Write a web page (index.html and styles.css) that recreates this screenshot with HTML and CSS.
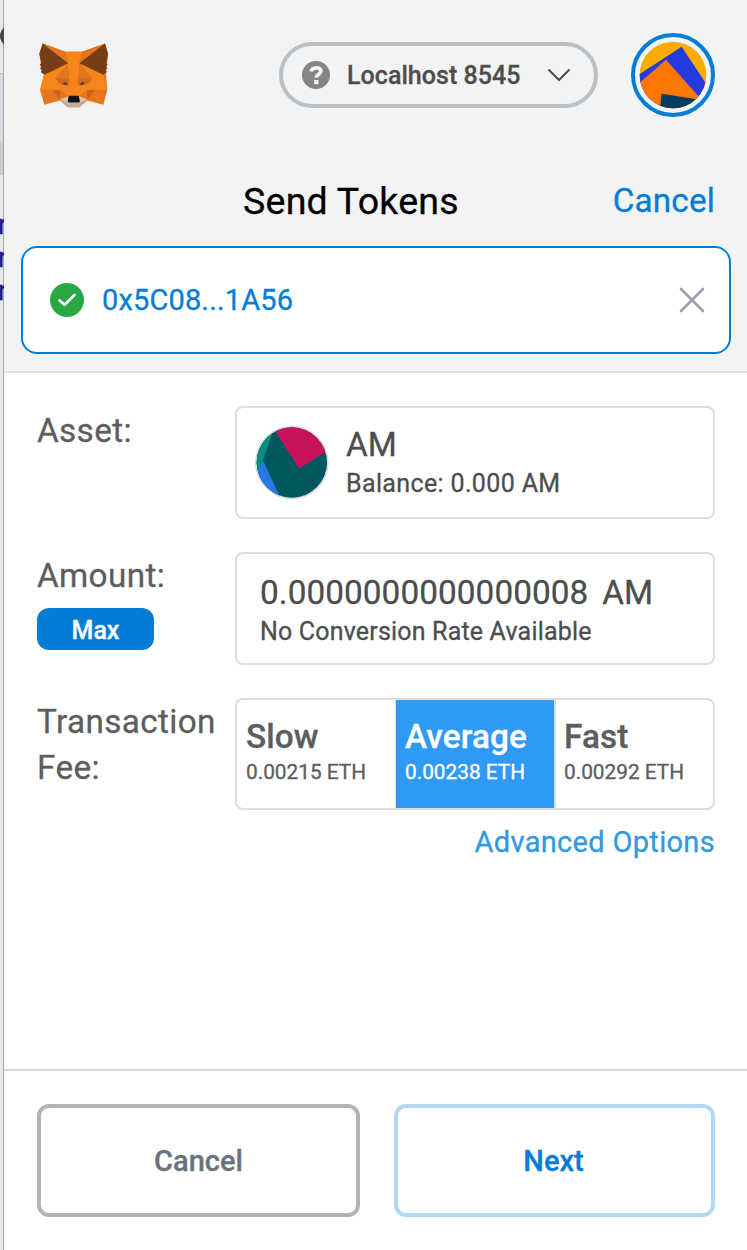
FILE: index.html
```html
<!DOCTYPE html>
<html lang="en">
<head>
<meta charset="utf-8">
<title>Send Tokens</title>
<link rel="stylesheet" href="styles.css">
</head>
<body>
<div class="window">
  <aside class="backdrop">
    <div class="backdrop-top"><span class="backdrop-dot"></span></div>
    <div class="backdrop-bar"></div>
    <div class="backdrop-shade"></div>
    <div class="backdrop-text"><span>r</span><span>r</span><span>r</span></div>
  </aside>
  <div class="popup">
    <header class="app-header">
      <svg class="fox" viewBox="117 128 207 194">
        <path fill="#e4761b" d="M128 129 196 154H246L315 129 324 160 318 223 322 268 310 313 262 300 238 320H204L180 300 133 313 120 268 132 223 118 160Z"/>
        <path fill="#f6851b" d="M132 223 204 188 207 154H236L239 188 310 223 322 268H268L238 287H204L172 268H120Z"/>
        <path fill="#e2761b" d="M128 129 196 154 204 188ZM315 129 246 154 239 188ZM204 188 166 233H208ZM239 188 278 233H233Z"/>
        <path fill="#f6851b" d="M196 154H246L237 190 234 252 237 287H204L208 252 206 190Z"/>
        <path fill="#763d16" d="M128 129 204 188 133 223 123 215 125 208 120 203 124 199 119 193 123 188 118 160ZM315 129 324 160 319 188 323 193 318 199 322 203 317 208 320 215 310 223 238 188Z"/>
        <path fill="#d5681a" d="M166 233 208 234 207 255 180 251ZM278 233 234 234 235 255 262 251Z"/>
        <path fill="#cd6116" d="M158 269H181L180 297ZM285 269H260L262 297Z"/>
        <path fill="#e4761b" d="M181 269 205 286 180 297ZM260 269 237 286 262 297Z"/>
        <path fill="#4a4346" d="M187 249 197 244 203 254 192 253ZM255 249 245 244 239 254 250 253Z"/>
        <path fill="#d7c1b3" d="M180 298 204 287H238L262 297 238 310H204Z"/>
        <path fill="#c0ad9e" d="M180 298 204 306H238L262 297 238 320H206Z"/>
        <path fill="#161616" d="M206 286H236L240 303 237 306H206L203 303Z"/>
      </svg>
      <div class="network">
        <svg class="network-icon" viewBox="0 0 28 28"><circle cx="14" cy="14" r="14" fill="#858585"/><path d="M9.2 10.4C9.8 5.8 18.9 5.5 18.9 10.1 18.9 13.3 14.5 13 14.4 16.7" fill="none" stroke="#f2f3f4" stroke-width="3.8"/><rect x="12.2" y="19" width="4.3" height="4.2" fill="#f2f3f4"/></svg>
        <span class="network-name">Localhost 8545</span>
        <svg class="chevron" viewBox="0 0 24 14"><path d="M1.5 1.5 12 12 22.5 1.5" fill="none" stroke="#4d4d4d" stroke-width="2.1"/></svg>
      </div>
      <svg class="account" viewBox="393 39 252 252">
        <defs><clipPath id="account-clip"><circle cx="519" cy="165" r="100"/></clipPath></defs>
        <circle cx="519" cy="165" r="120" fill="#f2f3f4" stroke="#037dd6" stroke-width="12"/>
        <g clip-path="url(#account-clip)">
          <path fill="#faac00" d="M410 60H630V270H410Z"/>
          <path fill="#2339e1" d="M410 168 545 80 640 224 600 275 410 250Z"/>
          <path fill="#fb7602" d="M410 196 498 119 630 267 590 300H410Z"/>
          <path fill="#033f5d" d="M485 221 600 239 620 280H478Z"/>
        </g>
      </svg>
    </header>
    <section class="recipient">
      <div class="title-row"><h1 class="title">Send Tokens</h1><a class="title-cancel">Cancel</a></div>
      <div class="address">
        <svg class="check" viewBox="0 0 34 34"><circle cx="17" cy="17" r="17" fill="#28a745"/><path d="m9.5 17.4 5 4.3L24.5 12" fill="none" stroke="#fff" stroke-width="2.8" stroke-linecap="round" stroke-linejoin="round"/></svg>
        <span class="address-text">0x5C08...1A56</span>
        <svg class="clear" viewBox="0 0 26 26"><path d="m2 2 22 22m0-22-22 22" stroke="#9b9fb2" stroke-width="2.6" stroke-linecap="round"/></svg>
      </div>
    </section>
    <main class="form">
      <div class="row">
        <div class="label"><span class="label-text asset">Asset:</span></div>
        <div class="field asset-field">
          <svg class="token" viewBox="72 74 224 226">
            <defs><clipPath id="token-clip"><circle cx="185" cy="187" r="106"/></clipPath></defs>
            <circle cx="185" cy="187" r="111" fill="#d6dadd"/>
            <g clip-path="url(#token-clip)">
              <path fill="#01575e" d="M70 70H300V300H70Z"/>
              <path fill="#c7135c" d="M127 80 207 205 300 146V70H120Z"/>
              <path fill="#048f82" d="M131 84 98 180 80 230 60 180 110 70Z"/>
              <path fill="#2779e2" d="M98 180 152 297 100 300 72 240Z"/>
            </g>
          </svg>
          <div class="lines"><span class="big am">AM</span><span class="small balance">Balance: 0.000 AM</span></div>
        </div>
      </div>
      <div class="row">
        <div class="label"><span class="label-text amount">Amount:</span><button class="max">Max</button></div>
        <div class="field amount-field">
          <div class="lines"><div class="amount-line"><span class="big value">0.0000000000000008</span><span class="big unit">AM</span></div><span class="small rate">No Conversion Rate Available</span></div>
        </div>
      </div>
      <div class="row">
        <div class="label"><span class="label-text fee">Transaction<br>Fee:</span></div>
        <div class="field fees">
          <div class="fee-option"><span class="speed">Slow</span><span class="cost">0.00215 ETH</span></div>
          <div class="fee-option selected"><span class="speed">Average</span><span class="cost">0.00238 ETH</span></div>
          <div class="fee-option"><span class="speed">Fast</span><span class="cost">0.00292 ETH</span></div>
        </div>
      </div>
      <a class="advanced">Advanced Options</a>
    </main>
    <footer class="actions">
      <button class="action secondary">Cancel</button>
      <button class="action primary">Next</button>
    </footer>
  </div>
</div>
</body>
</html>
```
FILE: styles.css
```css
* { box-sizing: border-box; }
body { margin: 0; font-family: Roboto, "Liberation Sans", sans-serif; color: #4d4d4d; -webkit-text-stroke: 0.3px; }
svg { display: block; flex: none; }
button { font: inherit; padding: 0; margin: 0; }
.window { width: 747px; height: 1250px; display: flex; overflow: hidden; background: #fff; }

.backdrop { width: 4px; flex: none; overflow: hidden; background: linear-gradient(90deg, #e9e9e9 0 2px, #dcdcdc 3px, #ababab 3px); }
.backdrop-top { height: 74px; padding-top: 25px; border-bottom: 1px solid #bbb; }
.backdrop-dot { display: block; width: 22px; height: 22px; border-radius: 50%; background: #484848; }
.backdrop-bar { height: 67px; background: linear-gradient(90deg, #d9dae2 0 2px, #c9cad0 3px, #a8a8ab 3px); }
.backdrop-shade { height: 34px; background: linear-gradient(90deg, #cdcdcd 0 3px, #a3a3a3 3px); }
.backdrop-text { display: flex; flex-direction: column; margin-top: 34px; margin-left: -2px; font-size: 27px; line-height: 33px; color: #1a1a8e; }

.popup { flex: 1; display: flex; flex-direction: column; min-width: 0; }
.app-header { height: 150px; padding: 33px 32px 0 35px; display: flex; align-items: flex-start; background: #f2f3f4; }
.fox { width: 69px; height: 65px; margin-top: 10px; }
.network { width: 319px; height: 66px; margin: 9px 33px 0 auto; padding: 0 23px 0 19px; display: flex; align-items: center; border: 4px solid #bbc0c5; border-radius: 33px; }
.network-icon { width: 28px; height: 28px; }
.network-name { margin-left: 17px; font-size: 25px; font-weight: 500; letter-spacing: 0.05px; white-space: nowrap; }
.chevron { width: 24px; height: 14px; margin-left: auto; }
.account { width: 84px; height: 84px; }

.recipient { height: 223px; padding: 0 16px 0 17px; background: #f2f3f4; border-bottom: 2px solid #dedfe2; }
.title-row { height: 96px; padding: 28px 16px 0 222px; display: flex; justify-content: space-between; line-height: 46px; }
.title { margin: 0; font-size: 37.5px; font-weight: 400; letter-spacing: 0.25px; color: #000; }
.title-cancel { font-size: 33.3px; letter-spacing: 0.15px; color: #037dd6; }
.address { height: 108px; padding: 0 24px 0 27px; display: flex; align-items: center; background: #fff; border: 2px solid #037dd6; border-radius: 16px; }
.check { width: 34px; height: 34px; }
.address-text { margin-left: 18px; font-size: 29px; letter-spacing: 0.15px; color: #037dd6; }
.clear { width: 26px; height: 26px; margin-left: auto; }

.form { flex: 1; padding: 33px 32px 0 33px; display: flex; flex-direction: column; gap: 33px; }
.row { display: flex; height: 113px; }
.label { width: 198px; flex: none; display: flex; flex-direction: column; align-items: flex-start; padding-top: 1px; color: #5d5d5d; }
.label-text { font-size: 33.3px; line-height: 46px; letter-spacing: 0.35px; white-space: nowrap; }
.asset { padding-top: 1px; }
.max { width: 117px; height: 42px; margin-top: 9px; border: 0; border-radius: 12px; background: #037dd6; color: #fff; font-size: 25px; font-weight: 500; line-height: 46px; }
.field { width: 480px; height: 113px; border: 2px solid #dedede; border-radius: 8px; display: flex; }
.asset-field { padding: 17px 17px 0; }
.token { width: 75px; height: 75px; }
.asset-field .lines { margin-left: 17px; }
.amount-field { padding: 19px 23px 0; }
.lines { display: flex; flex-direction: column; align-items: flex-start; white-space: nowrap; }
.big { font-size: 33.3px; line-height: 40px; }
.value { letter-spacing: 0.08px; }
.small { font-size: 25px; line-height: 37px; }
.balance { line-height: 38px; letter-spacing: 0.36px; }
.rate { letter-spacing: 0.18px; }
.amount-line { display: flex; gap: 14px; }
.fees { height: 112px; overflow: hidden; }
.fee-option { width: 160px; flex: none; padding: 16px 0 0 8px; display: flex; flex-direction: column; align-items: flex-start; color: #5d5d5d; white-space: nowrap; }
.fee-option:first-child { width: 158px; padding-left: 9px; }
.fee-option + .fee-option { border-left: 2px solid #dedede; }
.fee-option.selected { width: 159px; background: #2f9af3; border-left-width: 1px; padding-left: 9px; color: #fff; }
.speed { font-size: 33.3px; font-weight: 500; line-height: 42px; letter-spacing: 0.1px; }
.cost { font-size: 20.8px; line-height: 28px; }
.advanced { align-self: flex-end; margin-top: -19px; font-size: 29px; line-height: 34px; letter-spacing: 0.32px; color: #2f9ae0; }

.actions { height: 181px; padding: 33px 32px 0 33px; display: flex; justify-content: space-between; border-top: 2px solid #d2d8dd; }
.action { width: 323px; height: 113px; border: 4px solid; border-radius: 12px; background: #fff; font-size: 29px; font-weight: 500; }
.secondary { border-color: #b3b3b3; color: #6a737d; }
.primary { width: 321px; padding-right: 2px; border-color: #b0d8f2; color: #037dd6; }
```
